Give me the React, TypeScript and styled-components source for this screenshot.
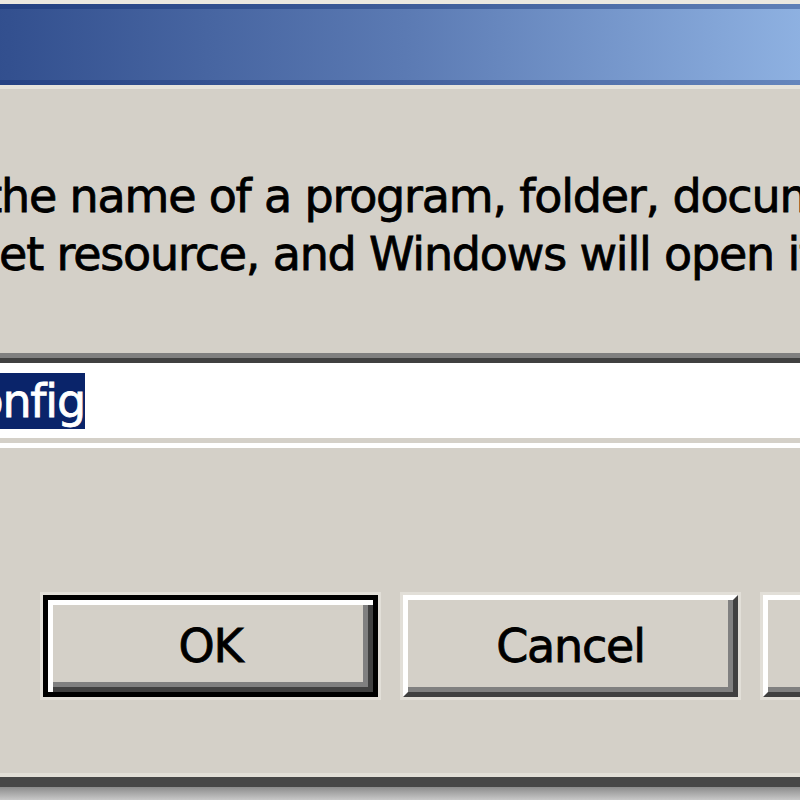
import styled, {createGlobalStyle, css} from 'styled-components'

const GlobalStyle = createGlobalStyle`
  html, body {
    margin: 0;
    padding: 0;
  }

  body {
    background: #c6c6c6;
    overflow: hidden;
    font-family: "DejaVu Sans", Verdana, sans-serif;
  }
`

const Viewport = styled.div`
  width: 800px;
  height: 800px;
  overflow: hidden;
  background: linear-gradient(180deg, #8c8c8c 0, #c8c8c8 13px) 0 787px / 100% 13px no-repeat, #c6c6c6;
`

const Dialog = styled.div`
  box-sizing: border-box;
  width: 1400px;
  margin-left: -260px;
  background: #d4d0c8;
  border-top: 4px solid #ebe8e0;
  border-left: 9px solid #ebe8e0;
  border-right: 9px solid #404040;
  border-bottom: 10px solid #474747;
  box-shadow: inset 0 -4px 0 #e2dfd7;
`

const TitleBar = styled.div`
  height: 81px;
  border-bottom: 4px solid #e6e3db;
  background: linear-gradient(90deg, #1d3a7c 0%, #33508f 18.8%, #5b7ab3 47.5%, #8fb2e2 76.7%, #a6caf0 100%);
  box-shadow: inset 0 5px 0 rgba(10, 36, 106, 0.35), inset 0 -5px 0 rgba(10, 36, 106, 0.3);
`

const Body = styled.div`
  padding: 78px 33px 80px 40px;
`

const Row = styled.div<{ $lead: number }>`
  display: grid;
  grid-template-columns: ${props => props.$lead}px 1fr;
  align-items: center;
`

const glyphs = css`
  font-size: 46px;
  letter-spacing: -1.2px;
  color: #000;
  -webkit-text-stroke: 0.8px currentColor;
`

const Text = styled.div`
  ${glyphs};
  line-height: 58px;
  white-space: nowrap;

  span {
    display: block;
  }
`

const FieldRow = styled(Row)`
  margin-top: 70px;
`

const Field = styled.div`
  ${glyphs};
  box-sizing: border-box;
  height: 95px;
  display: flex;
  align-items: center;
  padding-left: 3px;
  background: #fff;
  border: 5px solid;
  border-color: #808080 #fff #fff #808080;
  box-shadow: inset 0 5px 0 #404040, inset 5px 0 0 #404040, inset 0 -5px 0 #d4d0c8, inset -5px 0 0 #d4d0c8;
`

const Selected = styled.span`
  flex: 1;

  mark {
    display: inline-block;
    line-height: 56px;
    background: #0a246a;
    color: #fff;
  }
`

const Drop = styled.div`
  width: 72px;
  height: 75px;
  box-sizing: border-box;
  border: 5px solid;
  border-color: #fff #404040 #404040 #fff;
  background: #d4d0c8;
  display: flex;
  align-items: center;
  justify-content: center;
`

const Buttons = styled.div`
  display: flex;
  justify-content: flex-end;
  gap: 25px;
  margin-top: 147px;
`

const Button = styled.button<{ $default?: boolean }>`
  ${glyphs};
  box-sizing: border-box;
  width: 335px;
  height: 102px;
  padding: 0;
  font-family: inherit;
  background: #d4d0c8;
  border: 5px solid;
  border-color: #fff #404040 #404040 #fff;
  box-shadow: 0 0 0 3px #e2dfd8, inset -5px -5px 0 #808080;

  ${props => props.$default && css`
    border-color: #000;
    box-shadow: 0 0 0 3px #e2dfd8, inset 5px 5px 0 #fff, inset -5px -5px 0 #404040, inset -10px -10px 0 #808080;
  `}
`

export default function App() {
    return (
        <Viewport>
            <GlobalStyle/>
            <Dialog>
                <TitleBar/>
                <Body>
                    <Row $lead={81}>
                        <div/>
                        <Text>
                            <span>Type the name of a program, folder, document, or</span>
                            <span>Internet resource, and Windows will open it for you.</span>
                        </Text>
                    </Row>
                    <FieldRow $lead={88}>
                        <Text>Open:</Text>
                        <Field>
                            <Selected><mark>msconfig</mark></Selected>
                            <Drop>
                                <svg width="28" height="16" viewBox="0 0 7 4">
                                    <path d="M0 0h7L3.5 4z" fill="#000"/>
                                </svg>
                            </Drop>
                        </Field>
                    </FieldRow>
                    <Buttons>
                        <Button $default>OK</Button>
                        <Button>Cancel</Button>
                        <Button>Browse...</Button>
                    </Buttons>
                </Body>
            </Dialog>
        </Viewport>
    )
}
